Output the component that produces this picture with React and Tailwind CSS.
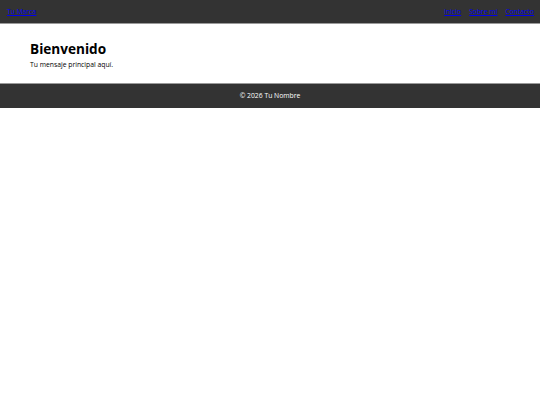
import React from 'react';

export default function App() {
  return (
    <div className="min-h-[405px] bg-white text-black" style={{ fontFamily: '"Open Sans", sans-serif' }}>
      {/* Header */}
      <header className="flex h-[24px] items-center justify-between bg-[#333333] px-[6px] pt-[1px] border-b border-[#9a9a9a]">
        <a href="#" className="pl-[1px] text-[6.8px] text-[#0000ee] underline">Tu Marca</a>
        <nav className="flex gap-[8px]">
          <a href="#" className="text-[6.8px] text-[#0000ee] underline">Inicio</a>
          <a href="#" className="text-[6.8px] text-[#0000ee] underline">Sobre mí</a>
          <a href="#" className="text-[6.8px] text-[#0000ee] underline">Contacto</a>
        </nav>
      </header>

      {/* Main */}
      <main className="px-[30px] pt-[16px] pb-[13px]">
        <h2 className="text-[13.6px] font-bold leading-[18px]">Bienvenido</h2>
        <p className="mt-[2px] text-[6.8px] leading-[10px]">Tu mensaje principal aquí.</p>
      </main>

      {/* Footer */}
      <footer className="flex h-[25px] items-center justify-center bg-[#333333] border-t border-[#9a9a9a]">
        <span className="text-[6.8px] text-white">© 2026 Tu Nombre</span>
      </footer>
    </div>
  );
}
